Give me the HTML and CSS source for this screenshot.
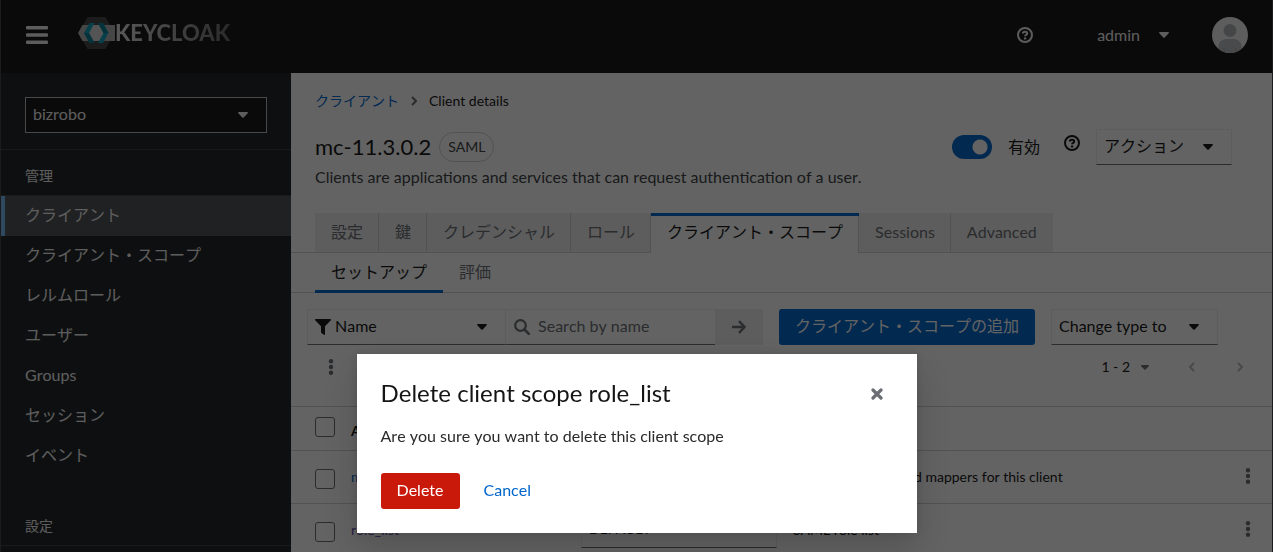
FILE: index.html
```html
<!DOCTYPE html>
<html lang="ja">
<head>
<meta charset="utf-8">
<title>Client details</title>
<link rel="stylesheet" href="styles.css">
</head>
<body class="page">
<svg class="sprite" aria-hidden="true">
  <symbol id="caret" viewBox="0 0 10 6"><path d="M.8 0h8.4c.7 0 1 .8.5 1.3L5.7 5.5a1 1 0 0 1-1.4 0L.3 1.3C-.2.8.1 0 .8 0z"/></symbol>
  <symbol id="help" viewBox="0 0 16 16"><circle cx="8" cy="8" r="7" fill="none" stroke="currentColor" stroke-width="2"/><path d="M5.700 6.500C5.900 5.300 6.800 4.700 8 4.700c1.300 0 2.200.7 2.200 1.700 0 1.500-2.100 1.400-2.100 2.900" fill="none" stroke="currentColor" stroke-width="2"/><circle cx="8.100" cy="11.400" r="1.200"/></symbol>
  <symbol id="kebab" viewBox="0 0 6 16"><circle cx="3" cy="2.300" r="2.200"/><circle cx="3" cy="8" r="2.200"/><circle cx="3" cy="13.700" r="2.200"/></symbol>
  <symbol id="chevron" viewBox="0 0 6 10"><path d="M1 1l4 4-4 4" fill="none" stroke="currentColor" stroke-width="2"/></symbol>
</svg>
<div class="app">
  <header class="masthead">
    <button class="icon-button" aria-label="Menu"><svg class="burger" viewBox="0 0 22 18"><rect width="22" height="3.400" rx="1"/><rect y="7.300" width="22" height="3.400" rx="1"/><rect y="14.600" width="22" height="3.400" rx="1"/></svg></button>
    <a class="brand" href="#" aria-label="Keycloak">
      <svg class="brand-mark" viewBox="0 0 37 32">
        <path d="M9.500 0h18l9 16-9 16h-18l-9-16z" fill="#454545"/>
        <path d="M4.500 8H37v16H4.500L0 16z" fill="#b4b4b4"/>
        <path d="M13 8h12l4.500 8-4.500 8H13l-4.500-8z" fill="#d8d8d8"/>
        <path d="M6 16l5.500-10h5L11 16l5.500 10h-5z" fill="#0fa3bd"/>
        <path d="M6 16h5l5.500 10h-5z" fill="#0b8297"/>
        <path d="M30.500 16L25 6h-5l5.500 10L20 26h5z" fill="#0fa3bd"/>
        <path d="M20 6h5l5.500 10h-5z" fill="#0b8297"/>
      </svg>
      <span class="brand-name">KEYCLOAK</span>
    </a>
    <div class="masthead-tools">
      <button class="icon-button" aria-label="Help"><svg class="help"><use href="#help"/></svg></button>
      <button class="user-menu">admin <svg class="caret"><use href="#caret"/></svg></button>
      <svg class="avatar" viewBox="0 0 36 36" role="img" aria-label="Avatar"><clipPath id="round"><circle cx="18" cy="18" r="18"/></clipPath><g clip-path="url(#round)"><rect width="36" height="36" fill="#f0f0f0"/><circle cx="18" cy="13.500" r="6.500" fill="#b0b3b6"/><path d="M6.500 36v-6c0-5 3.500-8 8-8h7c4.500 0 8 3 8 8v6z" fill="#bcbec0"/><path d="M12 36v-5M24 36v-5" stroke="#a8aaac" stroke-width="1.500"/></g></svg>
    </div>
  </header>

  <div class="columns">
    <nav class="sidebar" aria-label="Global">
      <div class="realm">
        <div class="select realm-select"><select aria-label="Realm"><option>bizrobo</option></select><svg class="caret"><use href="#caret"/></svg></div>
      </div>
      <h2 class="nav-title">管理</h2>
      <ul class="nav-list">
        <li><a class="nav-link current" href="#">クライアント</a></li>
        <li><a class="nav-link" href="#">クライアント・スコープ</a></li>
        <li><a class="nav-link" href="#">レルムロール</a></li>
        <li><a class="nav-link" href="#">ユーザー</a></li>
        <li><a class="nav-link" href="#">Groups</a></li>
        <li><a class="nav-link" href="#">セッション</a></li>
        <li><a class="nav-link" href="#">イベント</a></li>
      </ul>
      <h2 class="nav-title nav-title-next">設定</h2>
    </nav>

    <main class="main">
      <div class="intro">
        <div class="crumbs"><a href="#">クライアント</a><svg class="chevron"><use href="#chevron"/></svg><span>Client details</span></div>
        <div class="heading-row">
          <h1 class="heading">mc-11.3.0.2</h1>
          <span class="badge">SAML</span>
          <div class="heading-tools">
            <label class="switch"><input type="checkbox" checked><span>有効</span></label>
            <button class="icon-button raised" aria-label="Help for enabled"><svg class="help"><use href="#help"/></svg></button>
            <div class="select action-select"><select aria-label="Action"><option>アクション</option></select><svg class="caret"><use href="#caret"/></svg></div>
          </div>
        </div>
        <p class="lead">Clients are applications and services that can request authentication of a user.</p>
      </div>

      <div class="tabs" role="tablist">
        <button class="tab" role="tab">設定</button><button class="tab" role="tab">鍵</button><button class="tab" role="tab">クレデンシャル</button><button class="tab" role="tab">ロール</button><button class="tab active" role="tab" aria-selected="true">クライアント・スコープ</button><button class="tab" role="tab">Sessions</button><button class="tab" role="tab">Advanced</button>
      </div>
      <div class="subtabs" role="tablist">
        <button class="subtab active" role="tab" aria-selected="true">セットアップ</button><button class="subtab" role="tab">評価</button>
      </div>

      <div class="toolbar">
        <div class="search-group">
          <div class="select filter-select"><svg class="lead-icon" viewBox="0 0 16 16"><path d="M.8 0h14.400c.8 0 1.100.8.6 1.300L10 7.200v8c0 .7-.7 1-1.200.6l-2.300-1.700a1 1 0 0 1-.5-.8V7.200L.2 1.300C-.3.8 0 0 .8 0z"/></svg><select aria-label="Filter by"><option>Name</option></select><svg class="caret"><use href="#caret"/></svg></div>
          <div class="search"><svg class="lead-icon" viewBox="0 0 16 16"><circle cx="6.500" cy="6.500" r="5.300" fill="none" stroke="currentColor" stroke-width="2.200"/><path d="M10.500 10.500l4.300 4.300" stroke="currentColor" stroke-width="2.600" stroke-linecap="round"/></svg><input type="text" placeholder="Search by name" aria-label="Search by name"></div>
          <button class="go" aria-label="Search"><svg viewBox="0 0 14 14"><path d="M0 7h12M7 1.200L12.600 7 7 12.800" fill="none" stroke="currentColor" stroke-width="2.400"/></svg></button>
        </div>
        <button class="button primary">クライアント・スコープの追加</button>
        <div class="select type-select"><select aria-label="Change type to"><option>Change type to</option></select><svg class="caret"><use href="#caret"/></svg></div>
      </div>
      <div class="toolbar-second">
        <button class="icon-button" aria-label="More actions"><svg class="kebab"><use href="#kebab"/></svg></button>
        <div class="pager">
          <button class="pager-range">1 - 2 <svg class="caret small"><use href="#caret"/></svg></button>
          <button class="icon-button" aria-label="Previous" disabled><svg class="chevron previous"><use href="#chevron"/></svg></button>
          <button class="icon-button" aria-label="Next" disabled><svg class="chevron"><use href="#chevron"/></svg></button>
        </div>
      </div>

      <table class="scopes">
        <colgroup><col class="col-check"><col class="col-name"><col class="col-type"><col><col class="col-more"></colgroup>
        <thead>
          <tr><th><input type="checkbox" aria-label="Select all"></th><th>Assigned client scope</th><th>Assigned type</th><th>Description</th><th></th></tr>
        </thead>
        <tbody>
          <tr><td><input type="checkbox" aria-label="Select dedicated scope"></td><td><a href="#">mc-11.3.0.2-dedicated</a></td><td>None</td><td>Dedicated scope and mappers for this client</td><td><button class="icon-button" aria-label="Actions"><svg class="kebab"><use href="#kebab"/></svg></button></td></tr>
          <tr><td><input type="checkbox" aria-label="Select role_list"></td><td><a class="visited" href="#">role_list</a></td><td><div class="select"><select aria-label="Assigned type"><option>DEFAULT</option></select></div></td><td>SAML role list</td><td><button class="icon-button" aria-label="Actions"><svg class="kebab"><use href="#kebab"/></svg></button></td></tr>
        </tbody>
      </table>
    </main>
  </div>
</div>

<div class="backdrop">
  <section class="modal" role="dialog" aria-modal="true" aria-labelledby="modal-title">
    <header class="modal-head"><h2 class="modal-title" id="modal-title">Delete client scope role_list</h2><button class="icon-button close" aria-label="Close"><svg viewBox="0 0 12 12"><path d="M2 2l8 8M10 2l-8 8" stroke="currentColor" stroke-width="3.200" stroke-linecap="round"/></svg></button></header>
    <p class="modal-body">Are you sure you want to delete this client scope</p>
    <footer class="modal-actions"><button class="button danger">Delete</button><button class="button link">Cancel</button></footer>
  </section>
</div>
</body>
</html>
```
FILE: styles.css
```css
* { box-sizing: border-box; }
.page {
  margin: 0;
  padding: 0 1px;
  height: 100vh;
  overflow: hidden;
  background: #1c1c1e;
  color: #151515;
  font: 16px/24px Lato, "Noto Sans CJK JP", sans-serif;
  font-kerning: none;
}
.sprite { position: absolute; width: 0; height: 0; }
svg { fill: currentColor; flex: none; }
button, select, input { font: inherit; font-kerning: none; color: inherit; margin: 0; }
button { background: none; border: 0; padding: 0; }
a { color: #06c; text-decoration: none; }
h1, h2, p, ul { margin: 0; padding: 0; font-weight: 400; }
ul { list-style: none; }
.app { height: 100%; display: flex; flex-direction: column; background: #fff; }
.icon-button { display: inline-flex; align-items: center; justify-content: center; }
.caret { width: 10px; height: 6px; }
.small { width: 8px; height: 5px; }
.help { width: 16px; height: 16px; }
.kebab { width: 6px; height: 16px; color: #6a6e73; }
.chevron { width: 6px; height: 10px; color: #6a6e73; }
.previous { transform: rotate(180deg); }

.masthead { height: 73px; flex: none; display: flex; align-items: center; padding: 0 24px 3px 25px; background: #151515; color: #f0f0f0; }
.burger { width: 22px; height: 18px; }
.brand { display: flex; align-items: center; margin-left: 30px; padding-bottom: 4px; }
.brand-mark { width: 37px; height: 32px; }
.brand-name {
  font: 900 22px/32px Lato, sans-serif;
  background: linear-gradient(90deg, #e4e4e4, #6c6c6c);
  -webkit-background-clip: text;
  background-clip: text;
  color: transparent;
}
.masthead-tools { display: flex; align-items: center; margin-left: auto; }
.user-menu { display: flex; align-items: center; gap: 19px; margin: 0 43px 0 64px; }
.avatar { width: 36px; height: 36px; }

.columns { flex: 1; min-height: 0; display: flex; }
.sidebar { width: 290px; flex: none; background: #212427; color: #f0f0f0; overflow: hidden; }
.realm { padding: 24px 24px 16px; border-bottom: 1px solid #3c3f42; }
.nav-title { padding: 14px 24px 7px; border-bottom: 1px solid #3c3f42; font-size: 14px; line-height: 24px; }
.nav-title-next { margin-top: 24px; }
.nav-link { display: block; padding: 7px 24px 9px; color: #f0f0f0; }
.current { background: #4f5255; padding-left: 20px; border-left: 4px solid #73bcf7; }

.select { position: relative; display: flex; align-items: center; height: 36px; border: 1px solid #f0f0f0; border-bottom-color: #6a6e73; }
.select select { appearance: none; flex: 1; min-width: 0; height: 100%; border: 0; border-radius: 0; background: none; padding: 0 32px 2px 7px; }
.select .caret { position: absolute; right: 18px; pointer-events: none; }
.realm-select { background: #151515; border-color: #b8bbbe; }

.main { flex: 1; min-width: 0; overflow: hidden; background: #fff; }
.intro { padding: 16px 24px; }
.crumbs { display: flex; align-items: center; gap: 12px; font-size: 14px; }
.heading-row { display: flex; align-items: center; gap: 8px; margin-top: 16px; height: 36px; }
.heading { font-size: 22px; line-height: 32px; }
.badge { border: 1px solid #d2d2d2; border-radius: 30px; padding: 2px 8px; font-size: 14px; color: #3c3f42; }
.heading-tools { display: flex; align-items: center; margin: 0 16px 0 auto; }
.switch { display: flex; align-items: center; gap: 16px; }
.switch input { appearance: none; width: 40px; height: 24px; border-radius: 12px; background: radial-gradient(circle at 28px 12px, #fff 7px, #06c 8px); }
.raised { margin: 0 16px 8px 24px; }
.action-select { width: 136px; }
.lead { color: #3c3f42; }

.tabs { display: flex; padding: 0 24px; margin-top: 8px; border-bottom: 1px solid #d2d2d2; }
.tab { padding: 7px 16px 8px; background: #f0f0f0; color: #6a6e73; box-shadow: inset -1px 0 #d2d2d2; }
.tab:last-child { box-shadow: none; }
.tab.active { background: #fff; color: #151515; margin-bottom: -1px; padding-bottom: 9px; box-shadow: inset 0 3px #06c, inset -1px 0 #d2d2d2; }
.subtabs { display: flex; padding: 0 24px; border-bottom: 1px solid #d2d2d2; }
.subtab { padding: 7px 16px 8px; color: #6a6e73; }
.subtab.active { color: #151515; margin-bottom: -1px; padding-bottom: 9px; box-shadow: inset 0 -3px #06c; }

.toolbar { display: flex; gap: 16px; padding: 16px 16px 0; }
.search-group { display: flex; }
.filter-select { width: 199px; padding-left: 7px; }
.filter-select select { padding-left: 4px; }
.lead-icon { width: 16px; height: 16px; }
.search { width: 209px; display: flex; align-items: center; gap: 8px; padding-left: 8px; border-top: 1px solid #f0f0f0; border-bottom: 1px solid #6a6e73; color: #6a6e73; }
.search input { flex: 1; min-width: 0; border: 0; background: none; padding: 0 0 2px; }
.search input::placeholder { color: #6a6e73; opacity: 1; }
.go { width: 48px; display: grid; place-items: center; background: #f0f0f0; color: #6a6e73; }
.go svg { width: 14px; height: 14px; }
.button { height: 36px; padding: 0 16px 2px; border-radius: 3px; color: #fff; }
.primary { background: #06c; }
.type-select { width: 167px; }
.toolbar-second { display: flex; align-items: center; justify-content: space-between; height: 61px; padding: 0 29px 17px 37px; }
.pager { display: flex; align-items: center; gap: 40px; }
.pager-range { display: flex; align-items: center; gap: 11px; font-size: 14px; }
.pager .chevron { color: #b8bbbe; }
.pager .caret { color: #6a6e73; }
.pager .icon-button:last-child { margin-left: 2px; }

.scopes { width: 100%; table-layout: fixed; border-collapse: collapse; border-top: 1px solid #d2d2d2; font-size: 14px; }
.col-check { width: 52px; }
.col-name { width: 230px; }
.col-type { width: 212px; }
.col-more { width: 48px; }
.scopes th, .scopes td { padding: 0 8px; text-align: left; border-bottom: 1px solid #d2d2d2; white-space: nowrap; }
.scopes th { height: 44px; padding-top: 4px; }
.scopes td { height: 53px; }
.scopes th:first-child { padding: 0 0 4px 24px; }
.scopes td:first-child { padding: 4px 0 0 24px; }
.scopes td:last-child { padding: 4px 0 0; text-align: center; }
.scopes input { appearance: none; display: block; width: 20px; height: 20px; border: 1px solid #6a6e73; border-radius: 3px; }
.visited { color: #6753ac; }

.backdrop { position: fixed; inset: 0 1px; display: flex; justify-content: center; align-items: flex-start; padding-top: 354px; background: rgba(3, 3, 3, .62); }
.modal { width: 560px; padding: 24px; background: #fff; box-shadow: 0 16px 32px rgba(3, 3, 3, .16), 0 0 8px rgba(3, 3, 3, .1); }
.modal-head { display: flex; justify-content: space-between; align-items: center; }
.modal-title { font-size: 24px; line-height: 30px; padding-bottom: 2px; }
.close { width: 32px; height: 32px; color: #6a6e73; }
.close svg { width: 12px; height: 12px; }
.modal-body { margin-top: 14px; color: #2b2b2b; }
.modal-actions { display: flex; gap: 8px; margin-top: 25px; }
.danger { background: #c9190b; }
.link { color: #06c; }
```
